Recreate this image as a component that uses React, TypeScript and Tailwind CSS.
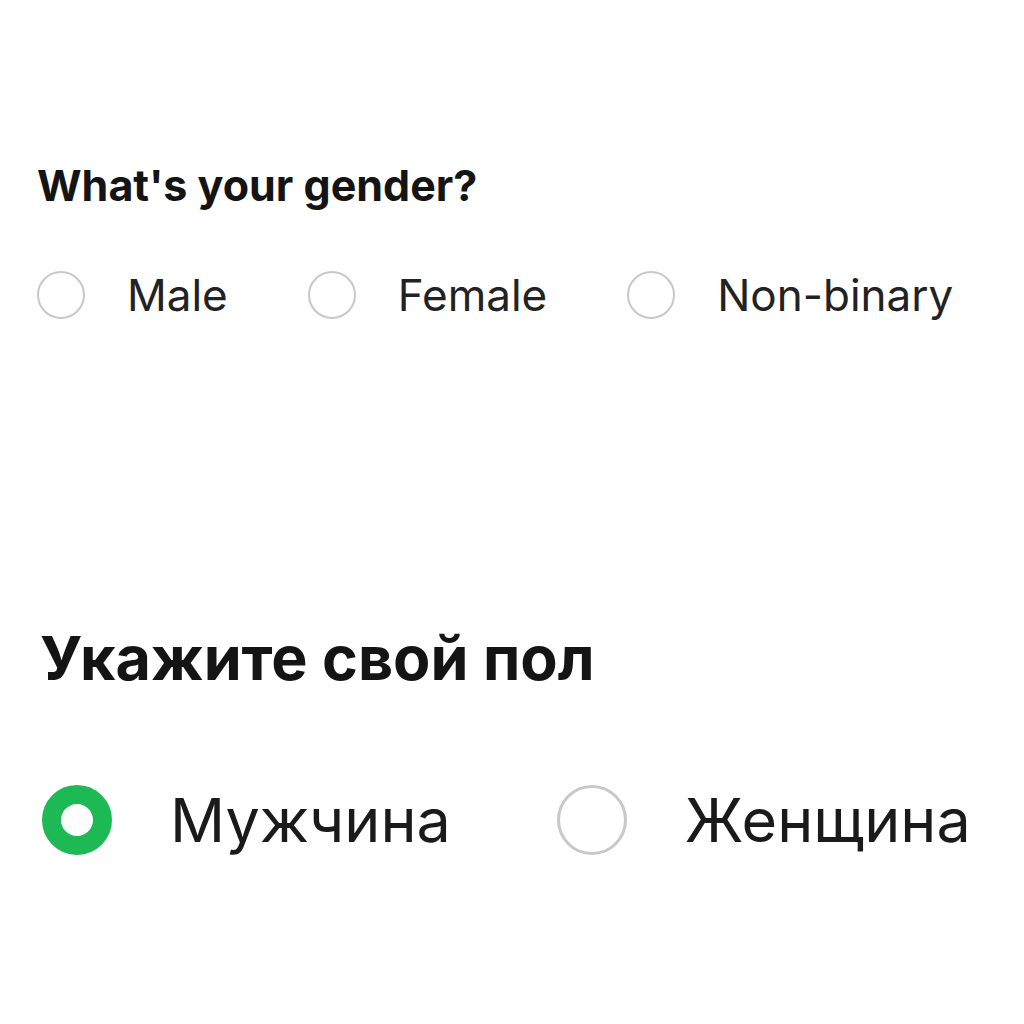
const font = { fontFamily: 'Inter, "Noto Sans", sans-serif' };

type RadioProps = { label: string; checked?: boolean; big?: boolean };

function Radio({ label, checked, big }: RadioProps) {
  return (
    <label className={big ? 'flex items-center gap-[58px]' : 'flex items-center gap-[42px]'}>
      {checked ? (
        <span className="block h-[70px] w-[70px] rounded-full border-[19px] border-[#1db954]" />
      ) : (
        <span
          className={
            big
              ? 'block h-[70px] w-[70px] rounded-full border-[3px] border-[#c8c8c8]'
              : 'block h-[48px] w-[48px] rounded-full border-2 border-[#c8c8c8]'
          }
        />
      )}
      <span className={big ? 'text-[61px] leading-none text-[#1a1a1a]' : 'text-[44px] leading-none text-[#222]'}>
        {label}
      </span>
    </label>
  );
}

export default function App() {
  return (
    <div className="min-h-[1024px] bg-white" style={font}>
      <div className="pt-[164px] pl-[37px]">
        <h2 className="text-[43px] font-bold leading-none text-[#141414]">What's your gender?</h2>
        <div className="mt-[64px] flex items-center gap-[80px]">
          <Radio label="Male" />
          <Radio label="Female" />
          <Radio label="Non-binary" />
        </div>
      </div>

      <div className="mt-[309px] pl-[40px]">
        <h2 className="text-[61px] font-bold leading-none text-[#141414]">Укажите свой пол</h2>
        <div className="mt-[96px] flex items-center gap-[106px] pl-[2px]">
          <Radio label="Мужчина" checked big />
          <Radio label="Женщина" big />
        </div>
      </div>
    </div>
  );
}
